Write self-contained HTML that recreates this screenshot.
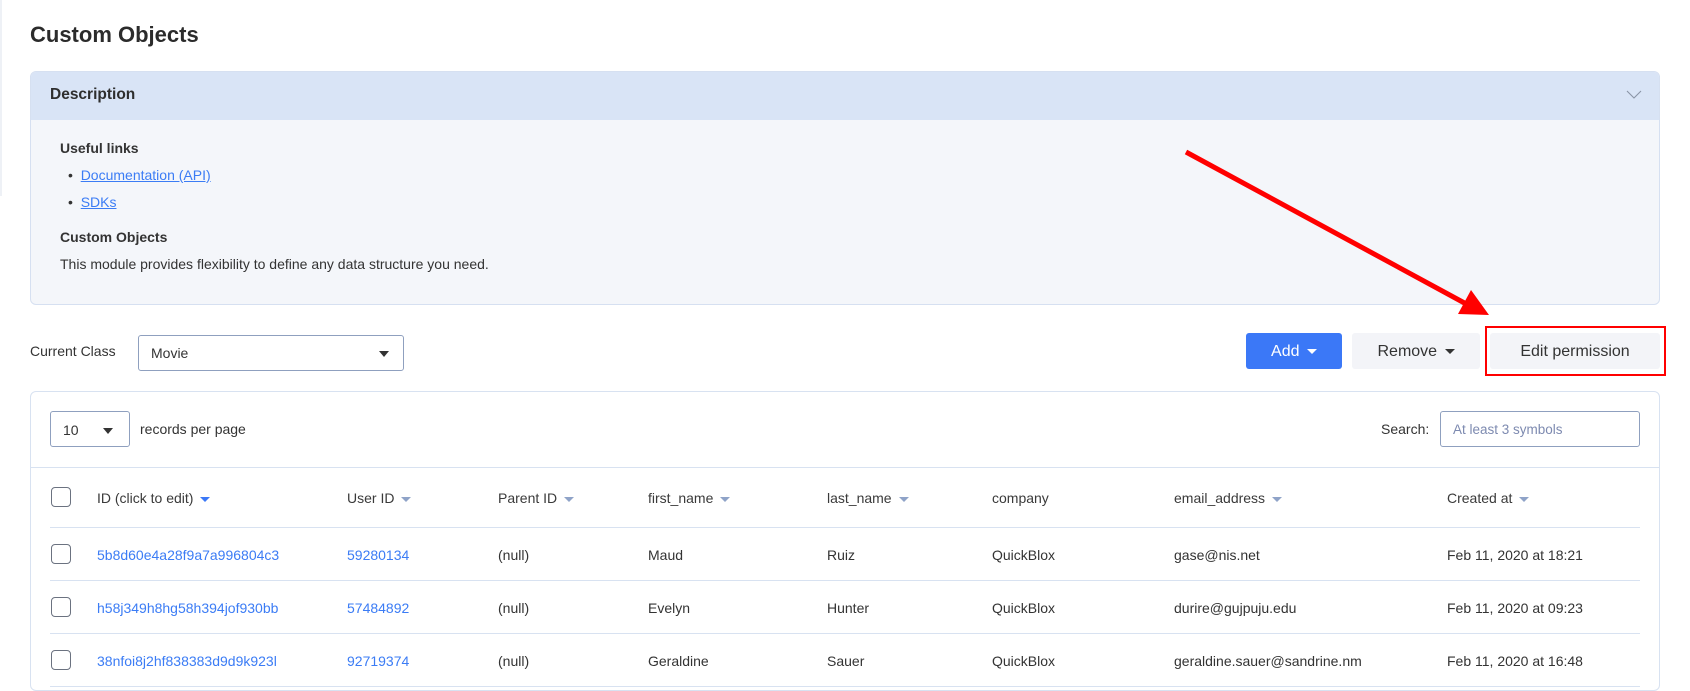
<!DOCTYPE html>
<html><head><style>
*{box-sizing:border-box;margin:0;padding:0}
body{width:1690px;height:687px;overflow:hidden;background:#fff;font-family:"Liberation Sans",sans-serif;color:#333;font-size:14px;position:relative}
.a{position:absolute;white-space:nowrap}
.lnk{color:#3b7cf5}
.hd{color:#3a3a3a}
.cb{position:absolute;width:20px;height:20px;border:1.5px solid #6b7280;border-radius:4px;background:#fff}
.tri{display:inline-block;width:0;height:0;border-left:5px solid transparent;border-right:5px solid transparent;border-top:5px solid #8fa3c8;vertical-align:middle;margin-left:7px}
.line{position:absolute;left:50px;width:1590px;height:1px;background:#d8e2f1}
</style></head><body>
<div class="a" style="left:0;top:0;width:2px;height:196px;background:#eef1f6"></div>
<div class="a" style="left:30px;top:22px;font-size:22px;font-weight:bold;color:#2b2b2b">Custom Objects</div>

<div class="a" style="left:30px;top:71px;width:1630px;height:234px;border:1px solid #d6e0f1;border-radius:6px;background:#f4f6fa;overflow:hidden">
 <div style="height:48px;background:#d9e4f6;padding:14px 0 0 19px;font-weight:bold;font-size:15.5px;color:#2e2e2e">Description</div>
 <svg style="position:absolute;right:17px;top:18px" width="16" height="10"><path d="M1 1 L8 8 L15 1" stroke="#8a94a6" stroke-width="1.1" fill="none"/></svg>
 <div class="a" style="left:29px;top:68px;font-weight:bold;font-size:14px">Useful links</div>
 <div class="a" style="left:37px;top:95px">•&nbsp;&nbsp;<span class="lnk" style="text-decoration:underline">Documentation (API)</span></div>
 <div class="a" style="left:37px;top:122px">•&nbsp;&nbsp;<span class="lnk" style="text-decoration:underline">SDKs</span></div>
 <div class="a" style="left:29px;top:157px;font-weight:bold">Custom Objects</div>
 <div class="a" style="left:29px;top:184px">This module provides flexibility to define any data structure you need.</div>
</div>

<div class="a" style="left:30px;top:343px">Current Class</div>
<div class="a" style="left:138px;top:335px;width:266px;height:36px;border:1px solid #8fa0bf;border-radius:3px;padding:9px 0 0 12px">Movie
 <span style="position:absolute;right:14px;top:15px;border-left:5px solid transparent;border-right:5px solid transparent;border-top:6px solid #333"></span></div>

<div class="a" style="left:1246px;top:333px;width:96px;height:36px;background:#3b78f7;border-radius:3px;color:#fff;font-size:16px;text-align:center;padding-top:10px">Add <span style="display:inline-block;border-left:5px solid transparent;border-right:5px solid transparent;border-top:5px solid #fff;vertical-align:middle;margin-left:3px"></span></div>
<div class="a" style="left:1352px;top:333px;width:128px;height:36px;background:#f3f4f8;border-radius:3px;font-size:16px;text-align:center;padding-top:10px">Remove <span style="display:inline-block;border-left:5px solid transparent;border-right:5px solid transparent;border-top:5px solid #333;vertical-align:middle;margin-left:3px"></span></div>
<div class="a" style="left:1490px;top:333px;width:170px;height:36px;background:#f3f4f8;border-radius:3px;font-size:16px;text-align:center;padding-top:10px">Edit permission</div>
<div class="a" style="left:1485px;top:326px;width:181px;height:50px;border:2.5px solid #f00"></div>

<svg class="a" style="left:0;top:0" width="1690" height="687"><line x1="1186" y1="152" x2="1470" y2="306" stroke="#f00" stroke-width="5"/><polygon points="1471,290 1458,314 1489,315" fill="#f00"/></svg>

<div class="a" style="left:30px;top:391px;width:1630px;height:300px;border:1px solid #d8e2f1;border-radius:6px"></div>
<div class="a" style="left:50px;top:411px;width:80px;height:36px;border:1px solid #8fa0bf;border-radius:3px;padding:10px 0 0 12px">10
 <span style="position:absolute;right:16px;top:16px;border-left:5px solid transparent;border-right:5px solid transparent;border-top:6px solid #333"></span></div>
<div class="a" style="left:140px;top:421px">records per page</div>
<div class="a" style="left:1381px;top:421px">Search:</div>
<div class="a" style="left:1440px;top:411px;width:200px;height:36px;border:1px solid #8fa0bf;border-radius:3px;padding:10px 0 0 12px;color:#7d8ab0;font-size:13.5px">At least 3 symbols</div>
<div class="a" style="left:31px;top:467px;width:1628px;height:1px;background:#d8e2f1"></div>

<div class="cb" style="left:51px;top:487px"></div>
<div class="a hd" style="left:97px;top:490px">ID (click to edit)<span class="tri" style="border-top-color:#3b78f7"></span></div>
<div class="a hd" style="left:347px;top:490px">User ID<span class="tri"></span></div>
<div class="a hd" style="left:498px;top:490px">Parent ID<span class="tri"></span></div>
<div class="a hd" style="left:648px;top:490px">first_name<span class="tri"></span></div>
<div class="a hd" style="left:827px;top:490px">last_name<span class="tri"></span></div>
<div class="a hd" style="left:992px;top:490px">company</div>
<div class="a hd" style="left:1174px;top:490px">email_address<span class="tri"></span></div>
<div class="a hd" style="left:1447px;top:490px">Created at<span class="tri"></span></div>
<div class="line" style="top:527px"></div>

<div class="cb" style="left:51px;top:544px"></div>
<div class="a lnk" style="left:97px;top:547px">5b8d60e4a28f9a7a996804c3</div>
<div class="a lnk" style="left:347px;top:547px">59280134</div>
<div class="a" style="left:498px;top:547px">(null)</div>
<div class="a" style="left:648px;top:547px">Maud</div>
<div class="a" style="left:827px;top:547px">Ruiz</div>
<div class="a" style="left:992px;top:547px">QuickBlox</div>
<div class="a" style="left:1174px;top:547px">gase@nis.net</div>
<div class="a" style="left:1447px;top:547px">Feb 11, 2020 at 18:21</div>
<div class="line" style="top:580px"></div>

<div class="cb" style="left:51px;top:597px"></div>
<div class="a lnk" style="left:97px;top:600px">h58j349h8hg58h394jof930bb</div>
<div class="a lnk" style="left:347px;top:600px">57484892</div>
<div class="a" style="left:498px;top:600px">(null)</div>
<div class="a" style="left:648px;top:600px">Evelyn</div>
<div class="a" style="left:827px;top:600px">Hunter</div>
<div class="a" style="left:992px;top:600px">QuickBlox</div>
<div class="a" style="left:1174px;top:600px">durire@gujpuju.edu</div>
<div class="a" style="left:1447px;top:600px">Feb 11, 2020 at 09:23</div>
<div class="line" style="top:633px"></div>

<div class="cb" style="left:51px;top:650px"></div>
<div class="a lnk" style="left:97px;top:653px">38nfoi8j2hf838383d9d9k923l</div>
<div class="a lnk" style="left:347px;top:653px">92719374</div>
<div class="a" style="left:498px;top:653px">(null)</div>
<div class="a" style="left:648px;top:653px">Geraldine</div>
<div class="a" style="left:827px;top:653px">Sauer</div>
<div class="a" style="left:992px;top:653px">QuickBlox</div>
<div class="a" style="left:1174px;top:653px">geraldine.sauer@sandrine.nm</div>
<div class="a" style="left:1447px;top:653px">Feb 11, 2020 at 16:48</div>
<div class="line" style="top:686px"></div>
</body></html>
